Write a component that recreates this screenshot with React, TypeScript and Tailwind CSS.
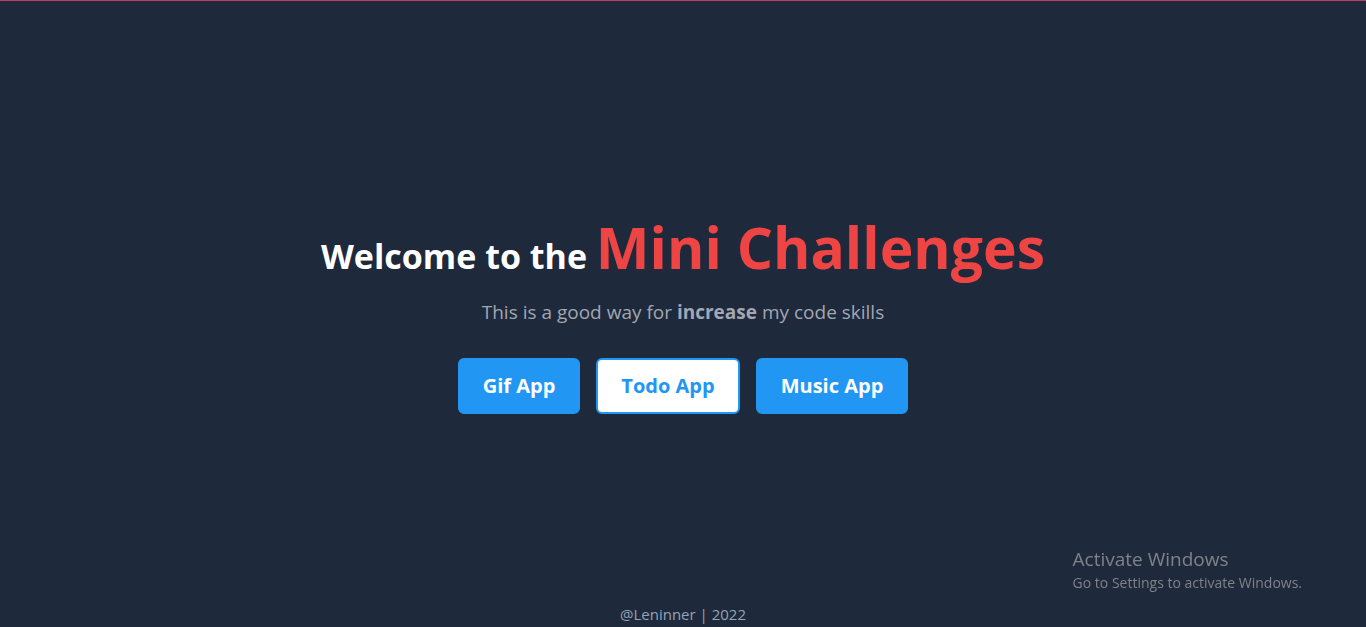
const apps = [
  { name: "Gif App", href: "#gif" },
  { name: "Todo App", href: "#todo" },
  { name: "Music App", href: "#music" },
];

function AppLink({ name, href, active }: { name: string; href: string; active: boolean }) {
  return (
    <a
      href={href}
      className={`rounded-md border-2 border-[#2196f3] px-[23px] py-3 text-xl leading-7 font-bold ${
        active ? "bg-white text-[#2196f3]" : "bg-[#2196f3] text-white"
      }`}
    >
      {name}
    </a>
  );
}

export default function App() {
  return (
    <div className="flex min-h-screen flex-col border-t border-[#b83f70] bg-[#1e293b] font-['Open_Sans','Noto_Sans',sans-serif]">
      <main className="flex grow flex-col items-center justify-center pt-7 text-center">
        <h1 className="text-[34px] font-bold text-white">
          Welcome to the <span className="text-[57px] leading-[60px] text-[#ef4444]">Mini Challenges</span>
        </h1>
        <p className="mt-4 text-[19px] leading-7 text-[#a1a7b3]">
          This is a good way for <strong className="font-bold">increase</strong> my code skills
        </p>
        <nav className="mt-8 flex gap-4">
          {apps.map((app) => (
            <AppLink key={app.name} {...app} active={app.name === "Todo App"} />
          ))}
        </nav>
      </main>
      <footer className="pb-px text-center text-[15px] leading-6 text-[#94a3b8]">@Leninner | 2022</footer>
      <aside className="fixed right-16 bottom-[34px] text-[#7f8389]">
        <p className="text-[19px] leading-7">Activate Windows</p>
        <p className="text-sm">Go to Settings to activate Windows.</p>
      </aside>
    </div>
  );
}
